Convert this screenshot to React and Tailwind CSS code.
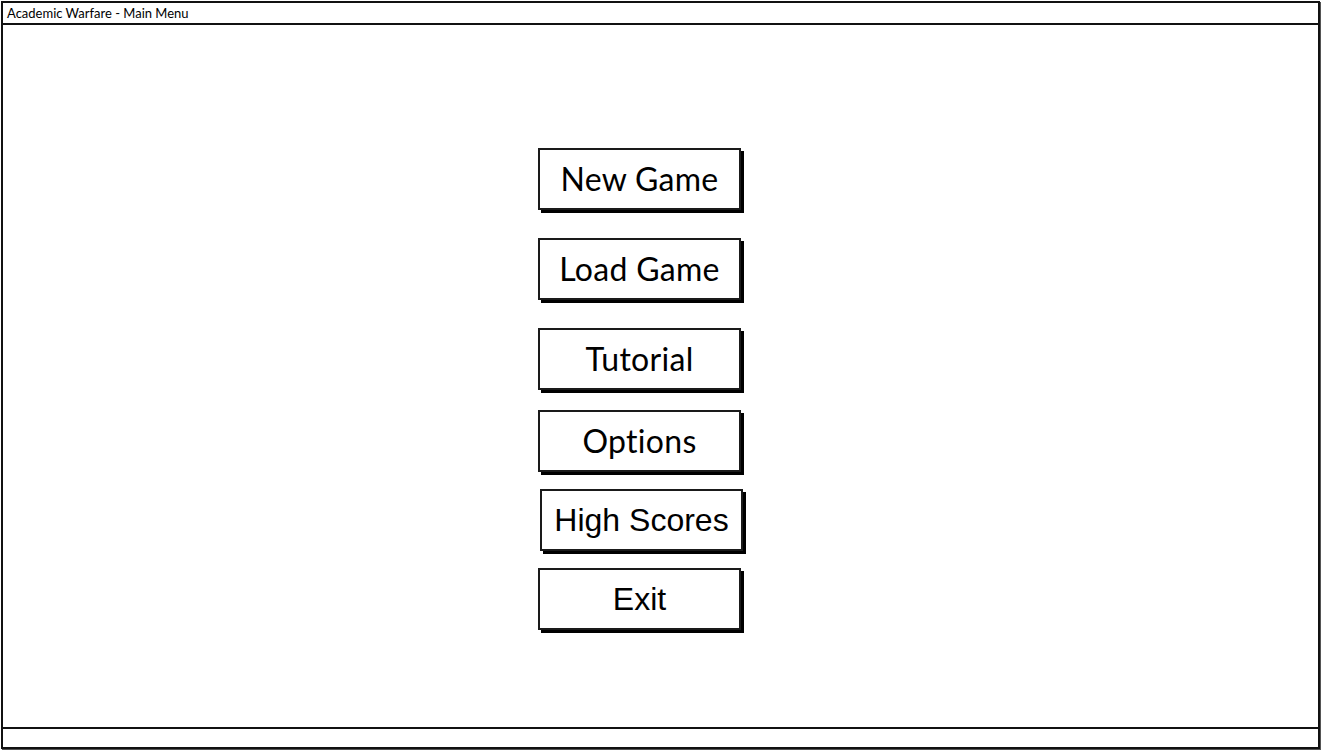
import React from "react";

// Main menu wireframe: window frame with title bar, stacked menu buttons, status bar
const buttons = [
  { label: "New Game", cls: "mt-[123px] w-[203px]", font: "sketch" },
  { label: "Load Game", cls: "mt-[28px] w-[203px]", font: "sketch" },
  { label: "Tutorial", cls: "mt-[28px] w-[203px]", font: "sketch" },
  { label: "Options", cls: "mt-[20px] w-[203px]", font: "sketch" },
  { label: "High Scores", cls: "mt-[17px] ml-[2px] w-[203px]", font: "arial" },
  { label: "Exit", cls: "mt-[17px] w-[203px]", font: "arial" },
];

const MenuButton = ({ label, cls, font }) => (
  <button
    className={`${cls} h-[62px] border-2 border-[#1a1a1a] bg-white shadow-[3px_3px_0_#000] text-black flex items-center justify-center ${
      font === "arial"
        ? "font-['Liberation_Sans',Arial,sans-serif] text-[32px]"
        : "font-['Lato',sans-serif] text-[32px] tracking-[0.3px]"
    }`}
  >
    {label}
  </button>
);

const App = () => {
  return (
    <div className="w-[1322px] h-[751px] bg-white p-[1px]">
      <div className="w-[1319px] h-[748px] border-2 border-[#111] flex flex-col shadow-[1px_1px_0_#555]">
        {/* Title bar */}
        <div className="h-[22px] border-b-2 border-[#111] flex items-center px-[4px] font-['Lato',sans-serif] text-[13px] text-black leading-none">
          Academic Warfare - Main Menu
        </div>

        {/* Menu area */}
        <div className="flex-1 flex flex-col items-start pl-[535px]">
          {buttons.map((b) => (
            <MenuButton key={b.label} {...b} />
          ))}
        </div>

        {/* Status bar */}
        <div className="h-[20px] border-t-2 border-[#111]" />
      </div>
    </div>
  );
};

export default App;
